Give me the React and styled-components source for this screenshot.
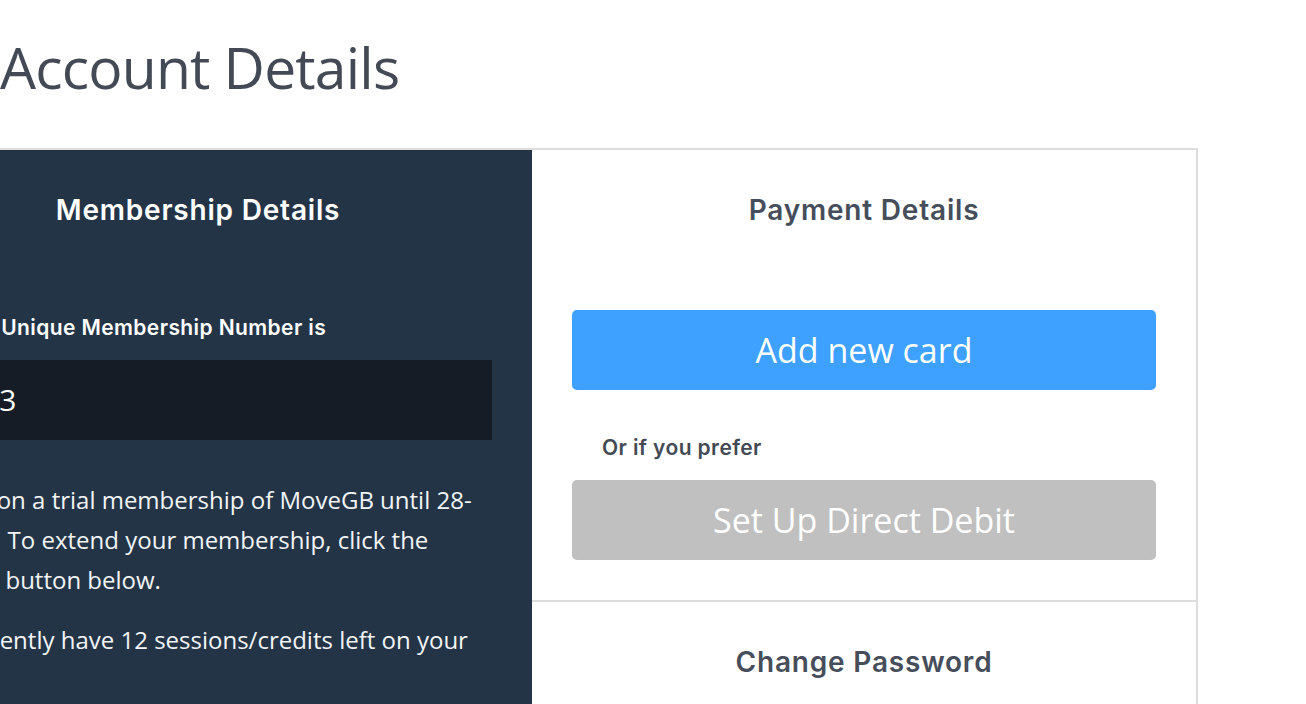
import styled, { createGlobalStyle } from "styled-components";

const GlobalStyle = createGlobalStyle`
  html, body {
    margin: 0;
    padding: 0;
    background: #ffffff;
    overflow: hidden;
  }
  * {
    box-sizing: border-box;
  }
`;

const Page = styled.div`
  width: 1306px;
  height: 704px;
  overflow: hidden;
  font-family: "Open Sans", "Liberation Sans", sans-serif;
`;

const Title = styled.h1`
  margin: 0;
  padding-top: 32px;
  height: 148px;
  font-family: "Open Sans", sans-serif;
  font-weight: 400;
  font-size: 57px;
  line-height: 70px;
  color: #434a56;
  letter-spacing: -0.8px;
`;

const Card = styled.div`
  display: grid;
  grid-template-columns: 668px 664px;
  margin-left: -136px;
  width: 1334px;
  min-height: 600px;
  border-top: 2px solid #dddddd;
  border-right: 2px solid #dddddd;
`;

const Panel = styled.section`
  display: flex;
  flex-direction: column;
  background: ${(p) => (p.dark ? "#243447" : "#ffffff")};
  color: ${(p) => (p.dark ? "#ffffff" : "#474e5b")};
`;

const Section = styled.div`
  border-bottom: ${(p) => (p.divided ? "2px solid #dddddd" : "none")};
  padding-bottom: ${(p) => (p.divided ? "40px" : "0")};
`;

const PanelTitle = styled.h2`
  margin: 0;
  padding-top: 45px;
  text-align: center;
  font-family: "Inter", sans-serif;
  font-weight: 600;
  font-size: 28px;
  line-height: 30px;
  letter-spacing: 0.8px;
  color: inherit;
`;

const PanelBody = styled.div`
  padding: ${(p) => p.pad};
  display: flex;
  flex-direction: column;
`;

const Label = styled.div`
  font-family: "Inter", sans-serif;
  font-weight: 600;
  font-size: 21px;
  line-height: 26px;
  letter-spacing: 0.4px;
  color: ${(p) => (p.dark ? "#ffffff" : "#434a54")};
  margin: ${(p) => p.m};
`;

const NumberBox = styled.div`
  height: 80px;
  background: #151c25;
  color: #ffffff;
  font-family: "Open Sans", sans-serif;
  font-size: 30px;
  line-height: 80px;
  padding-left: 60px;
  margin-top: 19px;
`;

const Text = styled.p`
  margin: ${(p) => p.m || "0"};
  font-family: "Open Sans", sans-serif;
  font-size: 24px;
  line-height: 40px;
  color: #f2f4f6;
`;

const Button = styled.button`
  display: block;
  width: 100%;
  height: 80px;
  border: none;
  border-radius: 5px;
  background: ${(p) => (p.muted ? "#c0c0c0" : "#3ea1ff")};
  color: #ffffff;
  font-family: "Open Sans", sans-serif;
  font-size: 34px;
  margin-top: ${(p) => p.mt};
  cursor: pointer;
`;

export default function App() {
  return (
    <Page>
      <GlobalStyle />
      <Title>Account Details</Title>
      <Card>
        <Panel dark>
          <PanelTitle>Membership Details</PanelTitle>
          <PanelBody pad="0 40px 0 41px">
            <Label dark m="90px 0 0 42px">
              Your Unique Membership Number is
            </Label>
            <NumberBox>123</NumberBox>
            <Text m="40px 0 0">
              You are on a trial membership of MoveGB until 28-06-2016. To
              extend your membership, click the "Renew" button below.
            </Text>
            <Text m="20px 0 0">
              You currently have 12 sessions/credits left on your
            </Text>
          </PanelBody>
        </Panel>
        <Panel>
          <Section divided>
            <PanelTitle>Payment Details</PanelTitle>
            <PanelBody pad="0 40px">
              <Button mt="85px">Add new card</Button>
              <Label m="45px 0 0 30px">Or if you prefer</Label>
              <Button muted mt="19px">
                Set Up Direct Debit
              </Button>
            </PanelBody>
          </Section>
          <Section>
            <PanelTitle>Change Password</PanelTitle>
          </Section>
        </Panel>
      </Card>
    </Page>
  );
}
